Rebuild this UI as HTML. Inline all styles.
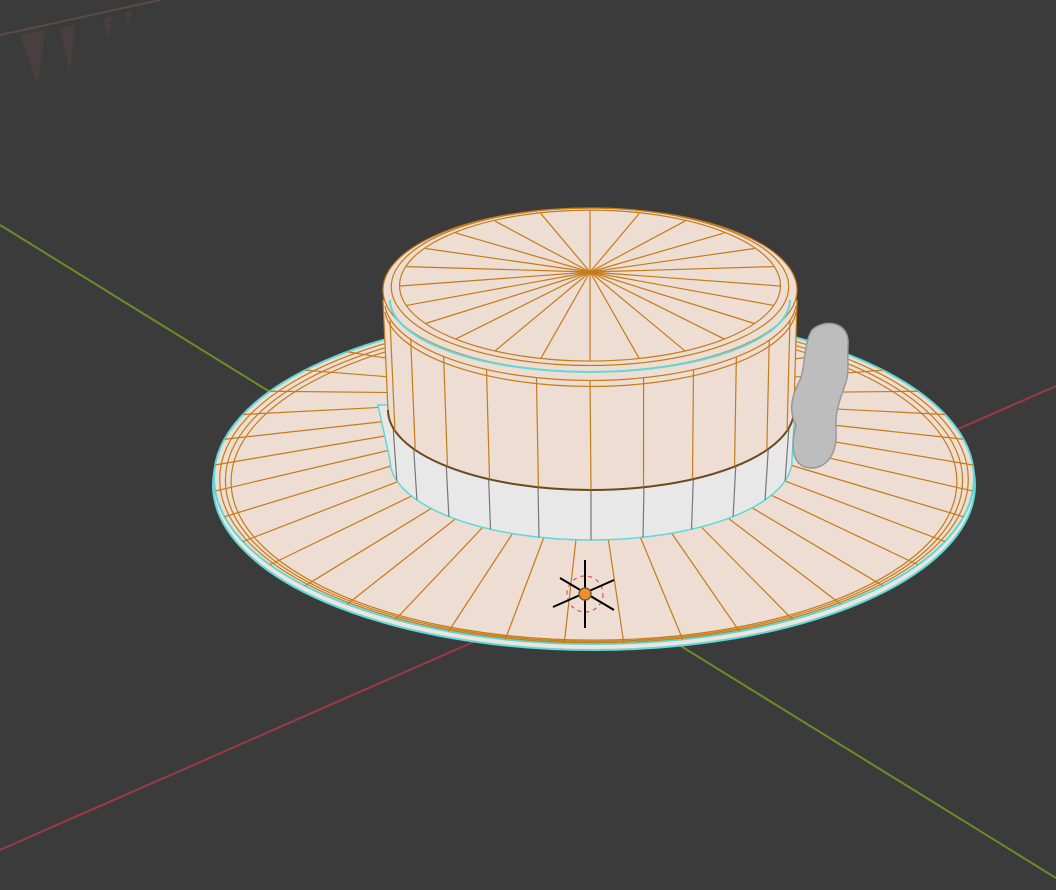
<!DOCTYPE html>
<html><head><meta charset="utf-8"><style>html,body{margin:0;padding:0;background:#3b3b3b;overflow:hidden}svg{display:block}</style></head>
<body>
<svg id="s" width="1056" height="890" viewBox="0 0 1056 890" xmlns="http://www.w3.org/2000/svg">
<rect width="1056" height="890" fill="#3b3b3b"/>
<line x1="0" y1="225" x2="1056" y2="878" stroke="#6a8e23" stroke-width="2"/>
<line x1="0" y1="850" x2="1056" y2="386" stroke="#9a3a48" stroke-width="2"/>
<path d="M0,35 L160,0" stroke="#5a4a4a" stroke-width="2"/>
<path d="M20,35 L38,85 L45,30 Z M60,28 L70,72 L75,25 Z M103,18 L108,40 L112,16 Z M125,12 L128,26 L132,10Z" fill="#4a3f40"/>
<g id="g"></g>
</svg>
<script>
var g=document.getElementById('g'),h='';
var O='#c47c1a';
function E(cx,cy,rx,ry,a){return [cx+rx*Math.cos(a),cy+ry*Math.sin(a)];}
h+='<ellipse cx="594" cy="485" rx="381" ry="165" fill="#f0e4de" stroke="#5fd8d8" stroke-width="2"/>';
h+='<ellipse cx="594" cy="478" rx="380" ry="166" fill="#eeddd3" stroke="#5fd8d8" stroke-width="2"/>';
[0.985,0.97,0.955].forEach(function(s){h+='<ellipse cx="594" cy="'+(478+2*(1-s)*40)+'" rx="'+(380*s)+'" ry="'+(166*s)+'" fill="none" stroke="'+O+'" stroke-width="1.2"/>';});
for(var i=0;i<40;i++){var a=(i+0.5)/40*2*Math.PI;var p=E(594,478,380,166,a),q=E(592,440,190,90,a);h+='<line x1="'+q[0]+'" y1="'+q[1]+'" x2="'+p[0]+'" y2="'+p[1]+'" stroke="'+O+'" stroke-width="1.2"/>';}
h+='<path d="M378,405 L390,460 A201,80 0 0 0 792,460 L795,405 Z" fill="#e8e8e8" stroke="#5fd8d8" stroke-width="1.5"/>';
for(var i=1;i<12;i++){var a=Math.PI*i/12;var p=E(591,460,201,80,a);var q=E(591,405,205,80,a);h+='<line x1="'+q[0]+'" y1="'+q[1]+'" x2="'+p[0]+'" y2="'+p[1]+'" stroke="#777" stroke-width="1.2"/>';}
h+='<path d="M383,300 L388,410 A203,80 0 0 0 794,410 L797,300 Z" fill="#eeddd3" stroke="'+O+'" stroke-width="1.2"/>';
h+='<path d="M388,410 A203,80 0 0 0 794,410" fill="none" stroke="#6b4a20" stroke-width="2"/>';
for(var i=1;i<12;i++){var a=Math.PI*i/12;var p=E(591,410,203,80,a);var q=E(590,300,207,80,a);h+='<line x1="'+q[0]+'" y1="'+q[1]+'" x2="'+p[0]+'" y2="'+p[1]+'" stroke="'+O+'" stroke-width="1.2"/>';}
[6,12].forEach(function(d){h+='<path d="M385,'+(300+d)+' A206,80 0 0 0 796,'+(300+d)+'" fill="none" stroke="'+O+'" stroke-width="1.2"/>';});
h+='<ellipse cx="590" cy="290" rx="207" ry="82" fill="#eeddd3" stroke="'+O+'" stroke-width="1.2"/>';
h+='<path d="M390,300 A200,72 0 0 0 790,300" fill="none" stroke="#5fd8d8" stroke-width="2"/>';
[0.96,0.92].forEach(function(s){h+='<ellipse cx="590" cy="'+(288-3*(1-s)*10)+'" rx="'+(207*s)+'" ry="'+(82*s)+'" fill="none" stroke="'+O+'" stroke-width="1.2"/>';});
for(var i=0;i<24;i++){var a=i/24*2*Math.PI;var p=E(590,286,190,75,a);h+='<line x1="590" y1="272" x2="'+p[0]+'" y2="'+p[1]+'" stroke="'+O+'" stroke-width="1.2"/>';}
h+='<path d="M812,330 C825,318 850,322 848,345 C847,360 850,372 845,385 C840,400 835,410 836,430 C838,458 822,472 805,467 C790,462 792,440 796,425 C788,410 792,395 800,380 C806,365 803,345 812,330 Z" fill="#bdbdbd" stroke="#999" stroke-width="1.5"/>';
h+='<circle cx="585" cy="594" r="18" fill="none" stroke="#e05050" stroke-dasharray="4 4" stroke-width="1.2"/>';
h+='<line x1="585" y1="560" x2="585" y2="628" stroke="#000" stroke-width="2"/><line x1="560" y1="578" x2="614" y2="610" stroke="#000" stroke-width="2"/><line x1="553" y1="607" x2="614" y2="580" stroke="#000" stroke-width="2"/>';
h+='<circle cx="585" cy="594" r="6" fill="#f0902a" stroke="#7a5a3a" stroke-width="1.5"/>';
g.innerHTML=h;
</script>
</body></html>
